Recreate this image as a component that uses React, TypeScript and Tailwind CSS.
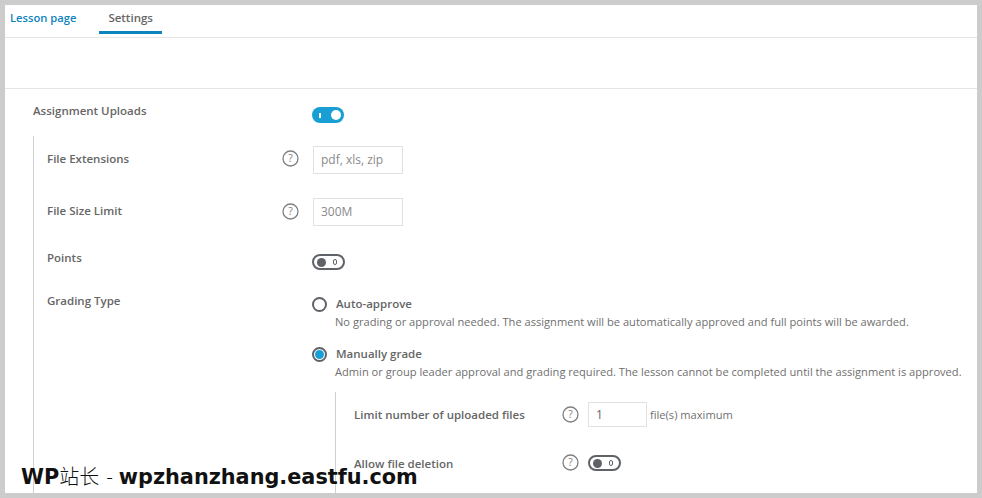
const FONT = "font-['Open_Sans','Noto_Sans',sans-serif]";

function Help() {
  return (
    <svg width="17" height="17" viewBox="0 0 17 17" className="shrink-0 text-[#808080]">
      <circle cx="8.5" cy="8.5" r="7.5" fill="none" stroke="currentColor" strokeWidth="1.3" />
      <text x="8.5" y="12.2" textAnchor="middle" fontSize="10.5" fontFamily="'Open Sans', sans-serif" fill="currentColor">?</text>
    </svg>
  );
}

function Toggle({ on }: { on?: boolean }) {
  if (on) {
    return (
      <div className="flex h-4 w-8 items-center justify-between rounded-full bg-[#1a9fd4] pl-[7px] pr-[3px]">
        <span className="h-[5px] w-[2px] bg-white" />
        <span className="h-[10px] w-[10px] rounded-full bg-white" />
      </div>
    );
  }
  return (
    <div className="flex h-[16px] w-[33px] items-center justify-between rounded-full border-2 border-[#5f6368] bg-white pl-[3px] pr-[6px]">
      <span className="h-[9px] w-[9px] rounded-full bg-[#5f6368]" />
      <span className="h-[6px] w-[4px] rounded-full border-[1.5px] border-[#5f6368]" />
    </div>
  );
}

function Radio({ on }: { on?: boolean }) {
  return (
    <span className="flex h-[15px] w-[15px] shrink-0 items-center justify-center rounded-full border-2 border-[#5f6368] bg-white">
      {on && <span className="h-[9px] w-[9px] rounded-full bg-[#1a9fd4]" />}
    </span>
  );
}

function Label({ children }: { children: React.ReactNode }) {
  return <div className="whitespace-nowrap text-[11.5px] leading-[16px] font-semibold text-[#666]">{children}</div>;
}

function TextBox({ value, className }: { value: string; className: string }) {
  return (
    <div className={`flex items-center border border-[#e2e2e2] pl-[7px] text-[12px] ${className}`}>
      {value}
    </div>
  );
}

export default function App() {
  return (
    <div className={`relative h-[498px] w-[982px] overflow-hidden border-[5px] border-[#cccccc] bg-white ${FONT}`}>
      {/* tabs */}
      <div className="flex h-[33px] items-start border-b border-[#e5e5e5] pl-[5px]">
        <div className="pt-[5px] text-[11.2px] leading-[16px] font-semibold text-[#0e84bd]">Lesson page</div>
        <div className="ml-[23px] h-[29px] border-b-[3px] border-[#0e84bd] px-[9px] pt-[5px] text-[11.5px] leading-[16px] font-semibold text-[#666]">
          Settings
        </div>
      </div>
      <div className="h-[51px] border-b border-[#e5e5e5]" />

      {/* settings */}
      <div className="pl-[28px]">
        <div className="flex h-[47px] items-start">
          <div className="w-[279px] pt-[14px]"><Label>Assignment Uploads</Label></div>
          <div className="pt-[18px]"><Toggle on /></div>
        </div>

        <div className="h-[400px] border-l border-[#cfcfcf] pl-[13px]">
          <div className="flex h-[52px] items-start pt-[13px]">
            <div className="w-[235px] pt-[2px]"><Label>File Extensions</Label></div>
            <div className="pt-[1px]"><Help /></div>
            <TextBox value="pdf, xls, zip" className="ml-[14px] mt-[-3px] h-[28px] w-[90px] text-[#8a8a8a]" />
          </div>
          <div className="flex h-[47px] items-start pt-[13px]">
            <div className="w-[235px] pt-[2px]"><Label>File Size Limit</Label></div>
            <div className="pt-[2px]"><Help /></div>
            <TextBox value="300M" className="ml-[14px] mt-[-3px] h-[28px] w-[90px] text-[#8a8a8a]" />
          </div>
          <div className="flex h-[58px] items-start pt-[15px]">
            <div className="w-[265px]"><Label>Points</Label></div>
            <div className="pt-[4px]"><Toggle /></div>
          </div>

          <div className="flex items-start">
            <div className="w-[265px]"><Label>Grading Type</Label></div>
            <div className="flex-1">
              <div className="flex items-center gap-[9px] pt-[3px]">
                <Radio />
                <Label>Auto-approve</Label>
              </div>
              <div className="whitespace-nowrap pl-[23px] pt-[2px] text-[11.12px] leading-[16px] text-[#6f6f6f]">
                No grading or approval needed. The assignment will be automatically approved and full points will be awarded.
              </div>
              <div className="flex items-center gap-[9px] pt-[16px]">
                <Radio on />
                <Label>Manually grade</Label>
              </div>
              <div className="whitespace-nowrap pl-[23px] pt-[2px] text-[11.12px] leading-[16px] text-[#6f6f6f]">
                Admin or group leader approval and grading required. The lesson cannot be completed until the assignment is approved.
              </div>

              <div className="ml-[23px] mt-[12px] h-[110px] border-l border-[#cfcfcf] pl-[18px]">
                <div className="flex items-start pt-[12px]">
                  <div className="w-[208px] pt-[3px]"><Label>Limit number of uploaded files</Label></div>
                  <div className="pt-[2px]"><Help /></div>
                  <TextBox value="1" className="ml-[9px] mt-[-2px] h-[25px] w-[59px] text-[#666]" />
                  <span className="ml-[3px] pt-[3px] text-[11.12px] leading-[16px] text-[#6f6f6f]">file(s) maximum</span>
                </div>
                <div className="flex items-start pt-[25px]">
                  <div className="w-[208px] pt-[4px]"><Label>Allow file deletion</Label></div>
                  <div className="pt-[2px]"><Help /></div>
                  <div className="ml-[9px] pt-[3px]"><Toggle /></div>
                </div>
              </div>
            </div>
          </div>
        </div>
      </div>

      {/* watermark */}
      <div className="absolute left-[16px] top-[458px] whitespace-nowrap font-['DejaVu_Sans','Noto_Sans_CJK_SC',sans-serif] text-[20.8px] leading-[26px] font-bold text-[#111]">
        WP<span className="font-['Noto_Sans_CJK_SC',sans-serif] text-[20px] font-light">站长<span className="ml-[7px] mr-[6px]">-</span></span>wpzhanzhang.eastfu.com
      </div>
    </div>
  );
}
